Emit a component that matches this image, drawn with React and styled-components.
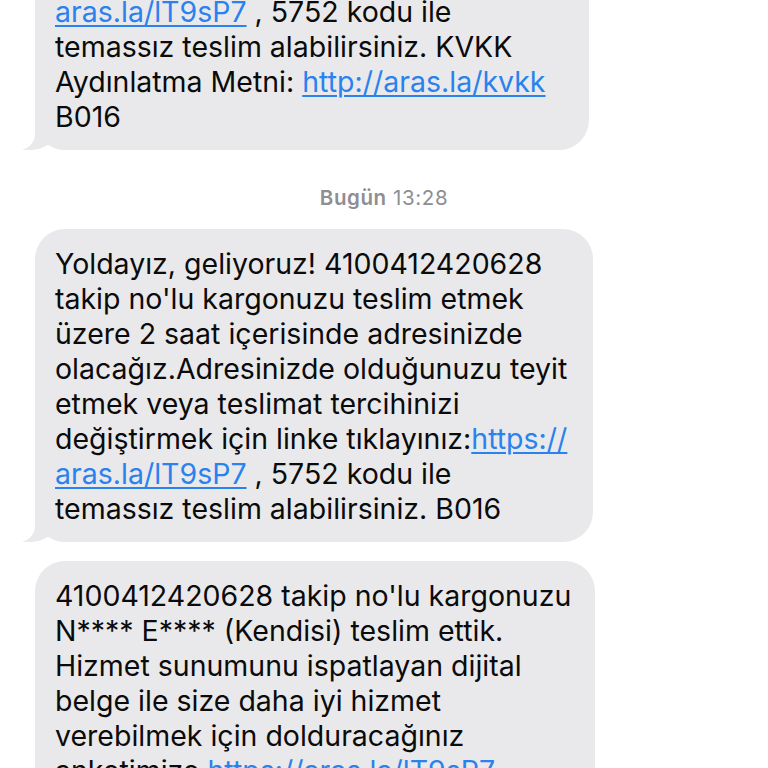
import React from "react";
import styled, { createGlobalStyle } from "styled-components";

const Global = createGlobalStyle`
  html, body { margin: 0; padding: 0; background: #ffffff; }
  body { overflow: hidden; }
`;

const Screen = styled.div`
  width: 768px;
  height: 768px;
  overflow: hidden;
  background: #ffffff;
  font-family: Inter, "Noto Sans", "Liberation Sans", sans-serif;
  -webkit-font-smoothing: antialiased;
`;

const Thread = styled.div`
  display: flex;
  flex-direction: column;
  align-items: flex-start;
  padding-left: 35px;
  margin-top: ${(p) => p.$offset}px;
`;

const Bubble = styled.div`
  position: relative;
  box-sizing: border-box;
  width: ${(p) => p.$width}px;
  padding: 17px 20px 16px 20px;
  margin-top: ${(p) => p.$gap || 0}px;
  background: #e9e9eb;
  border-radius: 30px;
  color: #0b0b0b;
  font-size: 28.5px;
  line-height: 35px;

  ${(p) =>
    p.$tail &&
    `
    &::before {
      content: "";
      position: absolute;
      bottom: 0;
      left: -12px;
      width: 34px;
      height: 32px;
      background: #e9e9eb;
      border-bottom-right-radius: 26px 22px;
    }
    &::after {
      content: "";
      position: absolute;
      bottom: 0;
      left: -42px;
      width: 42px;
      height: 34px;
      background: #ffffff;
      border-bottom-right-radius: 16px;
    }
  `}
`;

const Line = styled.span`
  position: relative;
  z-index: 1;
  display: block;
  white-space: nowrap;
`;

const Link = styled.a`
  color: #2a82ee;
  text-decoration: underline;
  text-decoration-thickness: 1.5px;
  text-underline-offset: 3px;
`;

const Stamp = styled.div`
  align-self: center;
  margin: 36px 0 19px -35px;
  font-size: 20.5px;
  line-height: 24px;
  color: #8e8e93;
  letter-spacing: 0.6px;
`;

const StampDay = styled.span`
  font-weight: 600;
`;

const firstLines = (
  <>
    <Line>Yoldayız, geliyoruz! 4100412420628</Line>
    <Line>takip no'lu kargonuzu teslim etmek</Line>
    <Line>üzere 2 saat içerisinde adresinizde</Line>
    <Line>olacağız.Adresinizde olduğunuzu teyit</Line>
    <Line>etmek veya teslimat tercihinizi</Line>
    <Line>
      değiştirmek için linke tıklayınız:<Link>https://</Link>
    </Line>
    <Line>
      <Link>aras.la/lT9sP7</Link> , 5752 kodu ile
    </Line>
  </>
);

export default function App() {
  return (
    <Screen>
      <Global />
      <Thread $offset={-233}>
        <Bubble $width={554} $tail>
          {firstLines}
          <Line>temassız teslim alabilirsiniz. KVKK</Line>
          <Line>
            Aydınlatma Metni: <Link>http://aras.la/kvkk</Link>
          </Line>
          <Line>B016</Line>
        </Bubble>
        <Stamp>
          <StampDay>Bugün</StampDay> 13:28
        </Stamp>
        <Bubble $width={558} $tail>
          {firstLines}
          <Line>temassız teslim alabilirsiniz. B016</Line>
        </Bubble>
        <Bubble $width={560} $gap={19}>
          <Line>4100412420628 takip no'lu kargonuzu</Line>
          <Line>N**** E**** (Kendisi) teslim ettik.</Line>
          <Line>Hizmet sunumunu ispatlayan dijital</Line>
          <Line>belge ile size daha iyi hizmet</Line>
          <Line>verebilmek için dolduracağınız</Line>
          <Line>
            anketimize <Link>https://aras.la/lT9sP7</Link>
          </Line>
        </Bubble>
      </Thread>
    </Screen>
  );
}
